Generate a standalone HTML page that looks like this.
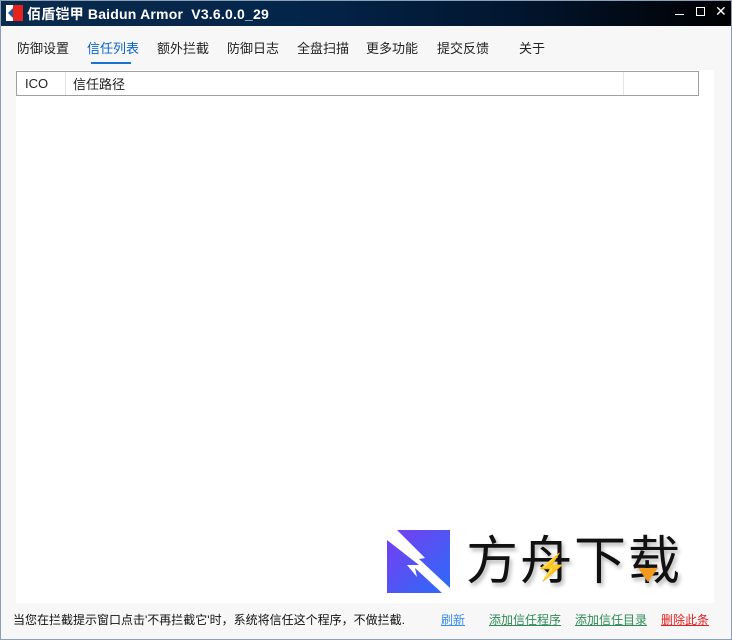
<!DOCTYPE html>
<html><head><meta charset="utf-8"><style>
*{margin:0;padding:0;box-sizing:border-box}
body{width:732px;height:640px;background:#f7f7f7;font-family:"Liberation Sans","Noto Sans CJK SC",sans-serif;position:relative;overflow:hidden}
.frame{position:absolute;left:0;top:0;width:732px;height:640px;border:1px solid #8aa0b8;pointer-events:none}
.title{position:absolute;left:0;top:0;width:732px;height:26px;background:linear-gradient(90deg,#0b2a4c,#03254a 40%,#021630 70%,#000 100%)}
.title .t{position:absolute;left:27px;top:4px;color:#fff;font-weight:bold;font-size:14px;letter-spacing:0.2px}
.tab{position:absolute;top:38px;font-size:13px;color:#222}
.abs{position:absolute}
</style></head><body>
<div class="title">
 <svg class="abs" style="left:6px;top:5px" width="17" height="16"><rect x="0" y="0" width="7" height="16" fill="#fff"/><rect x="7" y="0" width="10" height="16" fill="#e8231c"/><path d="M2 8 L7 3 L7 13 Z" fill="#1a5aa8"/></svg>
 <div class="t">佰盾铠甲 Baidun Armor&nbsp; V3.6.0.0_29</div>
 <div class="abs" style="left:675px;top:14px;width:9px;height:1px;background:#fff"></div>
 <div class="abs" style="left:696px;top:7px;width:9px;height:9px;border:1px solid #fff"></div>
 <div class="abs" style="left:715px;top:3px;color:#fff;font-size:14px">✕</div>
</div>
<div class="tab" style="left:17px">防御设置</div>
<div class="tab" style="left:87px;color:#0a64c8">信任列表</div>
<div class="abs" style="left:91px;top:62px;width:40px;height:2px;background:#1a73d0"></div>
<div class="tab" style="left:157px">额外拦截</div>
<div class="tab" style="left:227px">防御日志</div>
<div class="tab" style="left:297px">全盘扫描</div>
<div class="tab" style="left:366px">更多功能</div>
<div class="tab" style="left:437px">提交反馈</div>
<div class="tab" style="left:519px">关于</div>
<div class="abs" style="left:16px;top:70px;width:698px;height:533px;background:#fff"></div>
<div class="abs" style="left:16px;top:71px;width:683px;height:25px;border:1px solid #a0a0a0;background:#fff"></div>
<div class="abs" style="left:65px;top:72px;width:1px;height:23px;background:#e5e5e5"></div>
<div class="abs" style="left:623px;top:72px;width:1px;height:23px;background:#e5e5e5"></div>
<div class="abs" style="left:25px;top:76px;font-size:13px;color:#222">ICO</div>
<div class="abs" style="left:73px;top:74px;font-size:13px;color:#222">信任路径</div>
<svg class="abs" style="left:387px;top:530px" width="65" height="65"><defs><linearGradient id="g" x1="0" y1="0" x2="1" y2="1"><stop offset="0" stop-color="#7a3cf0"/><stop offset="1" stop-color="#2a6cf8"/></linearGradient></defs><rect width="63" height="63" fill="url(#g)"/><path d="M0 0 L10 0 L38 28 L32 29 L63 58 L63 63 L55 63 L28 38 L30 47 L20 35 L32 35 L0 10Z" fill="#fff"/></svg>
<div class="abs" style="left:466px;top:530px;font-size:52px;color:#111;letter-spacing:2px;line-height:64px;text-shadow:2px 3px 4px rgba(0,0,0,.3)">方舟下载</div>
<div class="abs" style="left:535px;top:552px;color:#f39a1e;font-size:26px">⚡</div>
<div class="abs" style="left:638px;top:568px;width:0;height:0;border-left:10px solid transparent;border-right:10px solid transparent;border-top:14px solid #f39a1e"></div>
<div class="abs" style="left:13px;top:611px;font-size:12px;color:#111">当您在拦截提示窗口点击'不再拦截它'时，系统将信任这个程序，不做拦截.</div>
<div class="abs" style="left:441px;top:611px;font-size:12px;color:#3a8ee8;text-decoration:underline">刷新</div>
<div class="abs" style="left:489px;top:611px;font-size:12px;color:#2e8b57;text-decoration:underline">添加信任程序</div>
<div class="abs" style="left:575px;top:611px;font-size:12px;color:#2e8b57;text-decoration:underline">添加信任目录</div>
<div class="abs" style="left:661px;top:611px;font-size:12px;color:#e02020;text-decoration:underline">删除此条</div>
<div class="frame"></div>
</body></html>
